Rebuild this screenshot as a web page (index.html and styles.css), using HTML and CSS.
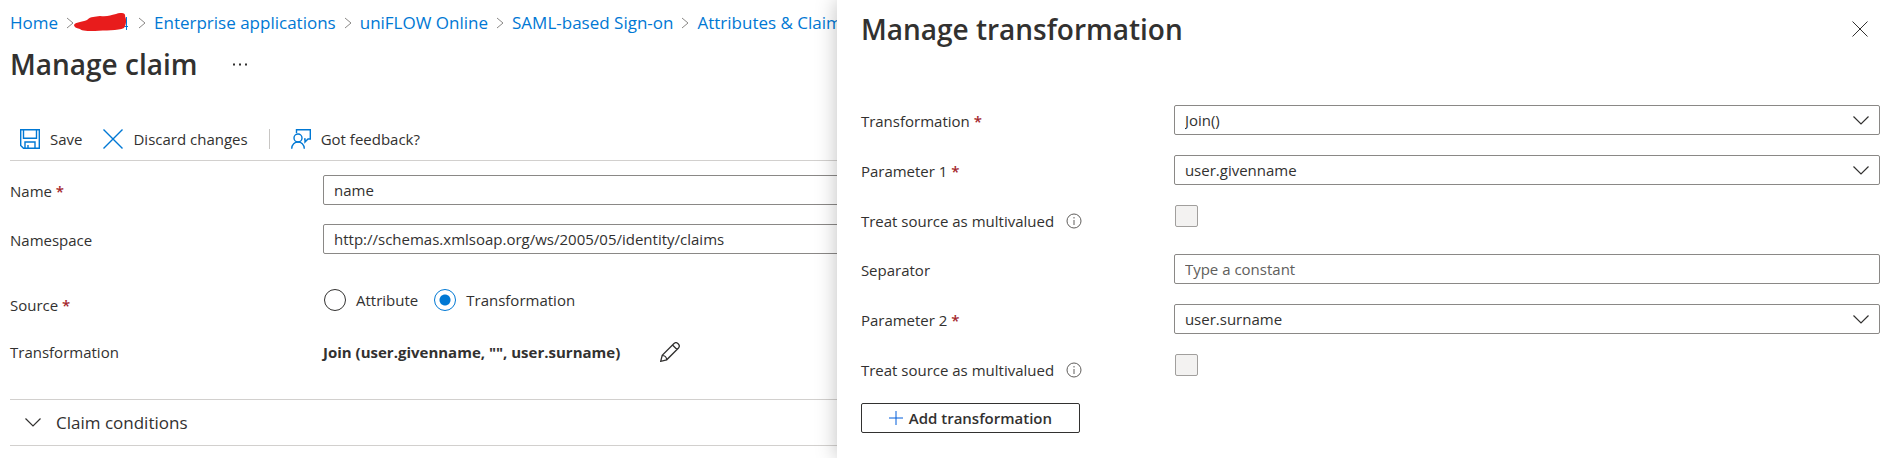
FILE: index.html
```html
<!DOCTYPE html>
<html lang="en">
<head>
<meta charset="utf-8">
<title>Manage claim</title>
<link rel="stylesheet" href="styles.css">
</head>
<body>
<main class="page">
  <nav class="breadcrumb" aria-label="Breadcrumb">
    <a href="#">Home</a>
    <svg class="sep" viewBox="0 0 8 12"><path d="M1 1l6 5-6 5"/></svg>
    <a href="#" class="redacted" aria-label="Tenant"><svg viewBox="0 0 54 20"><path class="digit" d="M52.500 4v13M48 13.500h6"/><path class="ink" d="M0 12C1 9 8 9 13 7C17 3 21 4 26 3C34 4 36 2 42 1C47-1 52 0 51 3C53 7 52 12 50 15C44 18 31 17 21 18C14 18 8 18 6 16C2 15 0 14 0 12z"/></svg></a>
    <svg class="sep" viewBox="0 0 8 12"><path d="M1 1l6 5-6 5"/></svg>
    <a href="#">Enterprise applications</a>
    <svg class="sep" viewBox="0 0 8 12"><path d="M1 1l6 5-6 5"/></svg>
    <a href="#">uniFLOW Online</a>
    <svg class="sep" viewBox="0 0 8 12"><path d="M1 1l6 5-6 5"/></svg>
    <a href="#">SAML-based Sign-on</a>
    <svg class="sep" viewBox="0 0 8 12"><path d="M1 1l6 5-6 5"/></svg>
    <a href="#">Attributes &amp; Claims</a>
  </nav>
  <header class="heading">
    <h1>Manage claim</h1>
    <button class="more" type="button" aria-label="More"><svg viewBox="0 0 15 3"><path d="M0 .5h2v2H0zM6 .5h2v2H6zM12 .5h2v2h-2z"/></svg></button>
  </header>
  <div class="toolbar">
    <button type="button"><svg class="tool" viewBox="0 0 20 20"><path d="M.7.7h18.6v18.6H3.5L.7 16.500zM3.500.7v8.600h13V.7M5 19.300v-6.300h10v6.300M8 19v-3"/></svg>Save</button>
    <button type="button"><svg class="tool" viewBox="0 0 20 20"><path d="M.5.5l19 19M19.500.5l-19 19"/></svg>Discard changes</button>
    <span class="divider"></span>
    <button type="button"><svg class="tool" viewBox="0 0 20 20"><path d="M5.500 4V.7h13.800v9.300h-2.300l-3 3v-3h-1"/><circle cx="7" cy="9" r="4"/><path d="M.7 19.800c0-9 12.600-9 12.600 0"/></svg>Got feedback?</button>
  </div>
  <form class="claim">
    <label for="name">Name <span class="req">*</span></label>
    <input class="field" id="name" type="text" value="name">
    <label for="ns">Namespace</label>
    <input class="field" id="ns" type="text" value="http://schemas.xmlsoap.org/ws/2005/05/identity/claims">
    <span class="source-label">Source <span class="req">*</span></span>
    <div class="radios">
      <label><input type="radio" name="source">Attribute</label>
      <label><input type="radio" name="source" checked>Transformation</label>
    </div>
    <span class="expression-label">Transformation</span>
    <div class="expression"><strong>Join (user.givenname, "", user.surname)</strong>
      <button type="button" aria-label="Edit"><svg viewBox="0 0 20 20"><path d="M.7 19.300l1.500-6L14 1.500c2.500-2.500 7 1.500 4.500 4.500L6.700 17.800zM12.500 3l4.500 4.500M2.200 13.300c2.500 0 4.500 2 4.500 4.500"/></svg></button>
    </div>
  </form>
  <button class="conditions" type="button"><svg viewBox="0 0 16 9"><path d="M.5.5L8 8l7.500-7.500"/></svg>Claim conditions</button>
</main>
<aside class="panel">
  <header class="panel-head">
    <h2>Manage transformation</h2>
    <button type="button" aria-label="Close"><svg viewBox="0 0 16 16"><path d="M.5.5l15 15M15.500.5l-15 15"/></svg></button>
  </header>
  <form class="transform">
    <div class="row"><label for="tr">Transformation <span class="req">*</span></label>
      <div class="select"><select class="field" id="tr"><option>Join()</option></select><svg viewBox="0 0 16 9"><path d="M.5.5L8 8l7.500-7.500"/></svg></div></div>
    <div class="row"><label for="p1">Parameter 1 <span class="req">*</span></label>
      <div class="select"><select class="field" id="p1"><option>user.givenname</option></select><svg viewBox="0 0 16 9"><path d="M.5.5L8 8l7.500-7.500"/></svg></div></div>
    <div class="row check"><label for="m1">Treat source as multivalued <svg class="info" viewBox="0 0 16 16"><circle cx="8" cy="8" r="7"/><path d="M8 7v5M8 4v1.500"/></svg></label>
      <input type="checkbox" id="m1"></div>
    <div class="row"><label for="sep">Separator</label>
      <input class="field" id="sep" type="text" placeholder="Type a constant"></div>
    <div class="row"><label for="p2">Parameter 2 <span class="req">*</span></label>
      <div class="select"><select class="field" id="p2"><option>user.surname</option></select><svg viewBox="0 0 16 9"><path d="M.5.5L8 8l7.500-7.500"/></svg></div></div>
    <div class="row check"><label for="m2">Treat source as multivalued <svg class="info" viewBox="0 0 16 16"><circle cx="8" cy="8" r="7"/><path d="M8 7v5M8 4v1.500"/></svg></label>
      <input type="checkbox" id="m2"></div>
    <button class="add" type="button"><svg viewBox="0 0 14 14"><path d="M7 0v14M0 7h14"/></svg>Add transformation</button>
  </form>
</aside>
</body>
</html>
```
FILE: styles.css
```css
* { box-sizing: border-box; }
body {
  margin: 0;
  min-height: 100vh;
  position: relative;
  overflow-x: hidden;
  background: #fff;
  color: #323130;
  font: 15px/20px "Open Sans", "Noto Sans", sans-serif;
}
button { padding: 0; border: 0; background: none; color: inherit; font: inherit; cursor: pointer; }
svg { fill: none; stroke: currentColor; flex: none; }
h1, h2 { margin: 0; font-size: 28px; line-height: 36px; font-weight: 600; }
.page { padding: 12px 10px 0; }
.breadcrumb { display: flex; align-items: center; gap: 8px; height: 22px; font-size: 17px; white-space: nowrap; }
.breadcrumb a { color: #0078d4; text-decoration: none; }
.sep { width: 8px; height: 12px; color: #8a8886; }
.redacted { display: flex; margin: 0 2px 0 -8px; }
.redacted svg { width: 54px; height: 20px; }
.digit { stroke: #0078d4; }
.ink { fill: #e81c1c; stroke: none; }
.heading { display: flex; align-items: center; gap: 36px; margin-top: 12px; }
.more { display: flex; }
.more svg { width: 15px; height: 3px; fill: currentColor; stroke: none; }
.toolbar { display: flex; align-items: center; gap: 21px; height: 44px; margin-top: 35px; padding-left: 10px; border-bottom: 1px solid #d2d0ce; }
.toolbar button { display: flex; align-items: center; gap: 10px; }
.tool { width: 20px; height: 20px; color: #0078d4; stroke-width: 1.4; }
.divider { width: 1px; height: 20px; background: #c8c6c4; }
.claim { display: grid; grid-template-columns: 313px 1fr; row-gap: 19px; align-items: center; padding: 14px 10px 37px 0; }
.claim > label { padding-top: 2px; }
.req { color: #a4262c; font-weight: 600; }
.field { width: 100%; height: 30px; padding: 0 10px; border: 1px solid #8a8886; border-radius: 2px; background: #fff; color: inherit; font: inherit; appearance: none; }
.field::placeholder { color: #605e5c; opacity: 1; }
.source-label { padding-top: 22px; }
.radios { display: flex; gap: 16px; align-self: start; padding: 16px 0 0 1px; }
.radios label { display: flex; align-items: center; gap: 10px; }
.radios input { appearance: none; width: 22px; height: 22px; margin: 0; border: 1px solid #323130; border-radius: 50%; }
.radios input:checked { border-color: #0078d4; background: radial-gradient(circle, #0078d4 5px, transparent 6px); }
.expression { display: flex; align-items: center; gap: 40px; padding-top: 8px; }
.expression button { display: flex; }
.expression svg { width: 20px; height: 20px; stroke-width: 1.3; }
.expression-label { padding-top: 8px; }
.conditions { display: flex; align-items: center; gap: 15px; width: 100%; height: 47px; padding-left: 15px; border: solid #d2d0ce; border-width: 1px 0; font-size: 17px; }
.conditions svg, .select svg { width: 16px; height: 9px; stroke-width: 1.2; }
.panel { position: absolute; inset: 0 0 0 auto; width: 56%; padding: 11px 22px 0 24px; background: #fff; box-shadow: 0 0 20px rgba(0, 0, 0, .25); }
.panel-head { display: flex; align-items: center; justify-content: space-between; padding-right: 12px; }
.panel-head button, .panel-head svg { display: flex; width: 16px; height: 16px; }
.transform { display: flex; flex-direction: column; gap: 20px; padding-top: 58px; }
.row { display: grid; grid-template-columns: 313px 1fr; align-items: center; height: 30px; }
.row.check { height: 29px; align-items: start; }
.row label { padding-top: 2px; }
.check label { display: flex; align-items: center; gap: 12px; padding-top: 6px; }
.check input { appearance: none; width: 23px; height: 22px; margin: 0 0 0 1px; border: 1px solid #a19f9d; border-radius: 2px; background: #f3f2f1; }
.info { width: 16px; height: 16px; color: #605e5c; }
.select { display: grid; align-items: center; }
.select > * { grid-area: 1 / 1; }
.select svg { justify-self: end; margin-right: 11px; pointer-events: none; }
.add { display: flex; align-items: center; justify-content: center; gap: 6px; align-self: flex-start; width: 219px; height: 30px; border: 1px solid #323130; border-radius: 2px; font-weight: 600; }
.add svg { width: 14px; height: 14px; color: #015cda; }
```
